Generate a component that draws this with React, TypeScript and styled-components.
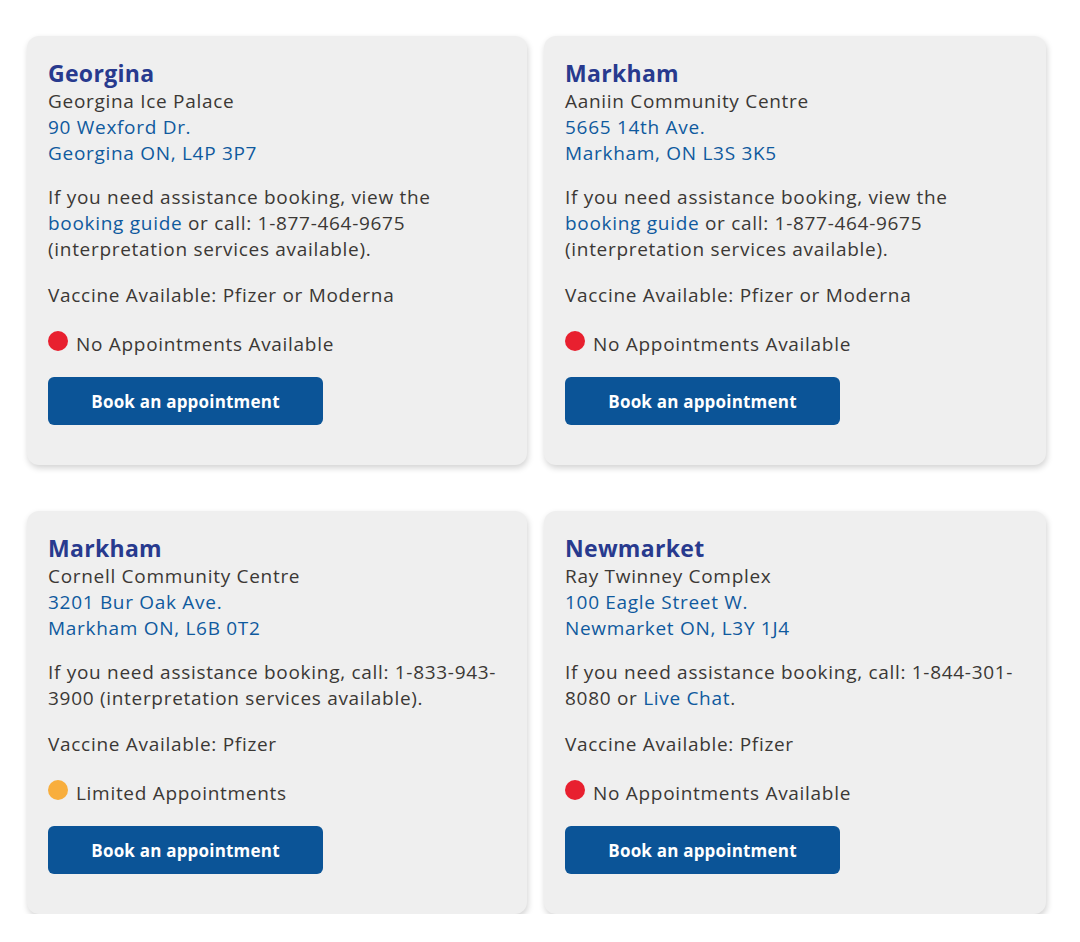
import React from 'react';
import styled, { createGlobalStyle } from 'styled-components';

const GlobalStyle = createGlobalStyle`
  body {
    margin: 0;
    background: #ffffff;
    font-family: 'Open Sans', 'Liberation Sans', sans-serif;
  }
`;

const Page = styled.div`
  display: grid;
  grid-template-columns: 500px 502px;
  column-gap: 17px;
  row-gap: 46px;
  padding: 36px 0 0 27px;
`;

const Card = styled.div`
  background: #efefef;
  border-radius: 12px;
  box-shadow: 1px 3px 6px rgba(0, 0, 0, 0.18);
  padding: 22px 21px 40px;
  color: #3b3835;
  font-size: 19px;
  letter-spacing: 0.7px;
  line-height: 26px;
`;

const Title = styled.h2`
  margin: 0;
  font-size: 23px;
  line-height: 30px;
  font-weight: 700;
  letter-spacing: 0.3px;
  color: #283a8e;
`;

const Line = styled.div<{ $link?: boolean }>`
  color: ${(p) => (p.$link ? '#0f5a9e' : '#3b3835')};
  white-space: nowrap;
`;

const Para = styled.p<{ $gap: number }>`
  margin: ${(p) => p.$gap}px 0 0;
  white-space: nowrap;
`;

const Link = styled.span`
  color: #0f5a9e;
`;

const Status = styled.div`
  display: flex;
  align-items: flex-start;
  gap: 8px;
  margin-top: 23px;
`;

const Dot = styled.span<{ $color: string }>`
  width: 20px;
  height: 20px;
  border-radius: 50%;
  background: ${(p) => p.$color};
  flex-shrink: 0;
`;

const Button = styled.button`
  display: block;
  margin-top: 20px;
  width: 275px;
  height: 48px;
  border: none;
  border-radius: 6px;
  background: #0b5497;
  color: #ffffff;
  font-family: inherit;
  font-size: 17px;
  font-weight: 700;
  letter-spacing: 0.2px;
  cursor: pointer;
`;

type Site = {
  town: string;
  place: string;
  street: string;
  city: string;
  help: React.ReactNode;
  vaccine: string;
  status: string;
  dot: string;
};

const sites: Site[] = [
  {
    town: 'Georgina',
    place: 'Georgina Ice Palace',
    street: '90 Wexford Dr.',
    city: 'Georgina ON, L4P 3P7',
    help: (
      <>
        If you need assistance booking, view the
        <br />
        <Link>booking guide</Link> or call: 1-877-464-9675
        <br />
        (interpretation services available).
      </>
    ),
    vaccine: 'Pfizer or Moderna',
    status: 'No Appointments Available',
    dot: '#e8202f',
  },
  {
    town: 'Markham',
    place: 'Aaniin Community Centre',
    street: '5665 14th Ave.',
    city: 'Markham, ON L3S 3K5',
    help: (
      <>
        If you need assistance booking, view the
        <br />
        <Link>booking guide</Link> or call: 1-877-464-9675
        <br />
        (interpretation services available).
      </>
    ),
    vaccine: 'Pfizer or Moderna',
    status: 'No Appointments Available',
    dot: '#e8202f',
  },
  {
    town: 'Markham',
    place: 'Cornell Community Centre',
    street: '3201 Bur Oak Ave.',
    city: 'Markham ON, L6B 0T2',
    help: (
      <>
        If you need assistance booking, call: 1-833-943-
        <br />
        3900 (interpretation services available).
      </>
    ),
    vaccine: 'Pfizer',
    status: 'Limited Appointments',
    dot: '#f8ae3d',
  },
  {
    town: 'Newmarket',
    place: 'Ray Twinney Complex',
    street: '100 Eagle Street W.',
    city: 'Newmarket ON, L3Y 1J4',
    help: (
      <>
        If you need assistance booking, call: 1-844-301-
        <br />
        8080 or <Link>Live Chat</Link>.
      </>
    ),
    vaccine: 'Pfizer',
    status: 'No Appointments Available',
    dot: '#e8202f',
  },
];

const SiteCard = ({ site }: { site: Site }) => (
  <Card>
    <Title>{site.town}</Title>
    <Line>{site.place}</Line>
    <Line $link>{site.street}</Line>
    <Line $link>{site.city}</Line>
    <Para $gap={18}>{site.help}</Para>
    <Para $gap={20}>Vaccine Available: {site.vaccine}</Para>
    <Status>
      <Dot $color={site.dot} />
      <span>{site.status}</span>
    </Status>
    <Button>Book an appointment</Button>
  </Card>
);

const App = () => (
  <>
    <GlobalStyle />
    <Page>
      {sites.map((s, i) => (
        <SiteCard key={i} site={s} />
      ))}
    </Page>
  </>
);

export default App;
